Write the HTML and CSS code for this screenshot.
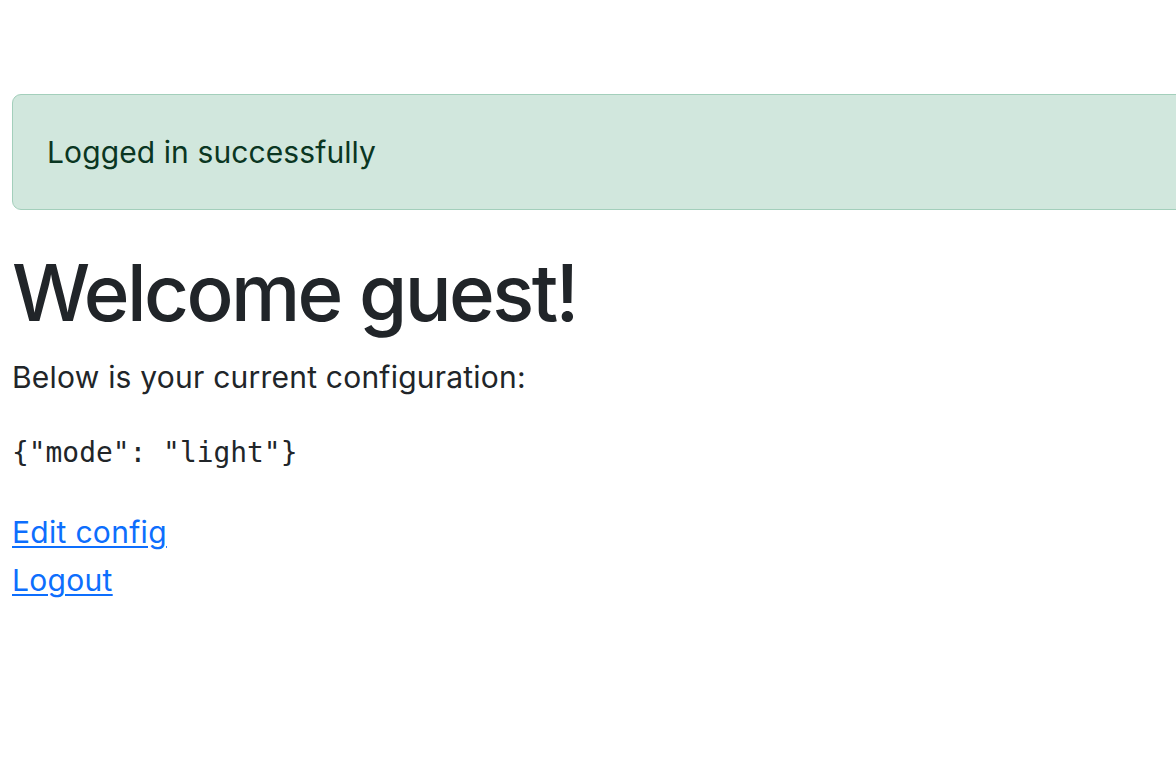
FILE: index.html
```html
<!DOCTYPE html>
<html lang="en">
<head>
<meta charset="utf-8">
<title>Welcome</title>
<link rel="stylesheet" href="styles.css">
</head>
<body>
<main class="page">
  <div class="alert alert-success">Logged in successfully</div>
  <h1 class="title">Welcome guest!</h1>
  <p class="lead-text">Below is your current configuration:</p>
  <pre class="config">{"mode": "light"}</pre>
  <nav class="links">
    <a href="#" class="link">Edit config</a>
    <a href="#" class="link">Logout</a>
  </nav>
</main>
</body>
</html>
```
FILE: styles.css
```css
html, body {
  margin: 0;
  padding: 0;
  background: #fff;
  overflow: hidden;
}
body {
  font-family: Inter, "Noto Sans", Roboto, sans-serif;
  color: #212529;
  font-size: 30px;
}
.page {
  padding: 94px 12px 0 12px;
  display: flex;
  flex-direction: column;
}
.alert {
  width: 1200px;
  box-sizing: border-box;
  background: #d1e7dd;
  border: 1.5px solid #a3cfbb;
  border-radius: 9px;
  color: #0a3622;
  padding: 36px 34px;
  line-height: 42px;
  font-size: 30px;
  letter-spacing: 0.1px;
}
.title {
  margin: 36px 0 0 0;
  font-size: 78px;
  font-weight: 500;
  line-height: 1.2;
  letter-spacing: -2.6px;
}
.lead-text {
  margin: 16px 0 0 0;
  line-height: 43px;
  letter-spacing: 0.22px;
}
.config {
  margin: 33px 0 0 0;
  font-family: "DejaVu Sans Mono", "Liberation Mono", monospace;
  font-size: 27.9px;
  line-height: 42px;
}
.links {
  margin-top: 34px;
  display: flex;
  flex-direction: column;
  align-items: flex-start;
}
.link {
  color: #0d6efd;
  text-decoration: underline;
  text-decoration-thickness: 2px;
  line-height: 48px;
  text-underline-offset: 3px;
  letter-spacing: 0.3px;
}
```
